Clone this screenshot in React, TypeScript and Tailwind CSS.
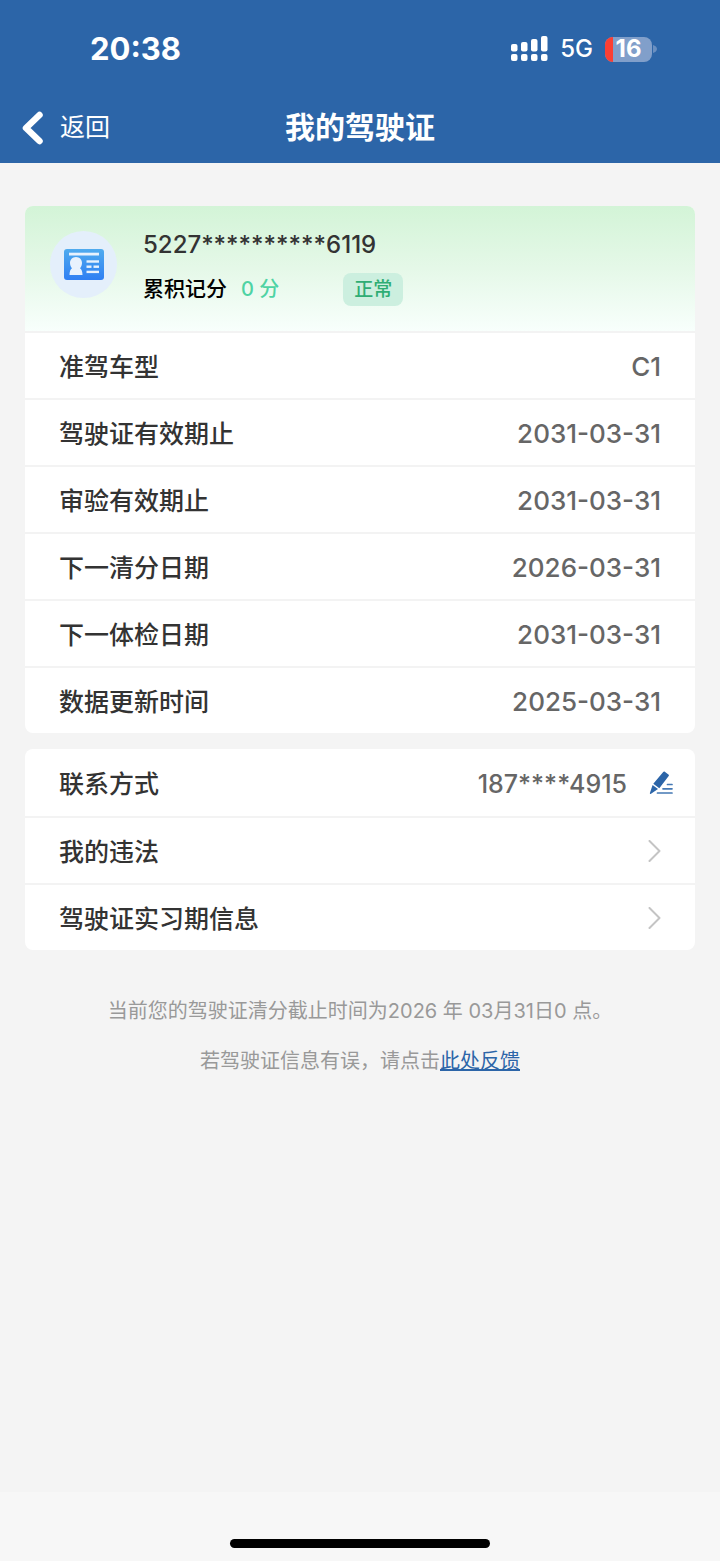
import type { ReactNode } from 'react';

interface LicenseField {
  label: string;
  value: string;
}

const licenseFields: LicenseField[] = [
  { label: '准驾车型', value: 'C1' },
  { label: '驾驶证有效期止', value: '2031-03-31' },
  { label: '审验有效期止', value: '2031-03-31' },
  { label: '下一清分日期', value: '2026-03-31' },
  { label: '下一体检日期', value: '2031-03-31' },
  { label: '数据更新时间', value: '2025-03-31' },
];

const links = ['我的违法', '驾驶证实习期信息'];

function SignalIcon() {
  return (
    <svg viewBox="0 0 37 26" className="h-[26px] w-[37px]" fill="currentColor" aria-hidden="true">
      <rect x="0" y="8" width="6.500" height="7.500" rx="2" />
      <rect x="10" y="6" width="6.500" height="9.500" rx="2" />
      <rect x="20" y="3" width="6.500" height="12.500" rx="2" />
      <rect x="30" y="0" width="6.500" height="15.500" rx="2" />
      <rect x="0" y="18" width="6.500" height="7" rx="2" />
      <rect x="10" y="18" width="6.500" height="7" rx="2" />
      <rect x="20" y="18" width="6.500" height="7" rx="2" />
      <rect x="30" y="18" width="6.500" height="7" rx="2" />
    </svg>
  );
}

function Battery({ level }: { level: number }) {
  return (
    <div className="flex items-center gap-px">
      <div className="relative flex h-[25px] w-[47px] items-center justify-center rounded-lg bg-[#819fca]">
        <div className="absolute inset-y-0 left-0 rounded-l-lg bg-[#fb3f33]" style={{ width: `${level}%` }} />
        <span className="relative text-2xl font-bold">{level}</span>
      </div>
      <svg viewBox="0 0 4 8" className="h-2 w-1" fill="#6a8fc0" aria-hidden="true">
        <path d="M0 0C2.400 .8 4 2 4 4S2.400 7.200 0 8Z" />
      </svg>
    </div>
  );
}

function BackIcon() {
  return (
    <svg viewBox="0 0 22 34" className="h-[34px] w-[22px]" fill="none" aria-hidden="true">
      <path d="M17.500 4 4 17 17.500 30" stroke="currentColor" strokeWidth="6.500" strokeLinecap="round" strokeLinejoin="round" />
    </svg>
  );
}

function LicenseIcon() {
  return (
    <svg viewBox="0 0 40 31" className="h-[31px] w-10" aria-hidden="true">
      <defs>
        <linearGradient id="license-fill" x1="0" y1="0" x2="0" y2="1">
          <stop offset="0" stopColor="#4fabee" />
          <stop offset="1" stopColor="#2f7ff3" />
        </linearGradient>
      </defs>
      <rect width="40" height="31" rx="3" fill="url(#license-fill)" />
      <g fill="#e8f2fd">
        <rect x="5" y="3.700" width="30" height="2.800" />
        <path d="M12 8c3.700 0 6 2.800 6 6 0 2.200-.9 3.900-2 5.200 1.600 1.100 2.500 3.500 2.500 6.800h-13c0-3.300.9-5.700 2.500-6.800-1.100-1.300-2-3-2-5.200 0-3.200 2.300-6 6-6Z" />
        <rect x="22.500" y="11.300" width="12.500" height="2.400" />
        <rect x="22.500" y="16.500" width="5" height="2.400" />
        <rect x="29.500" y="16.500" width="5.500" height="2.400" />
        <rect x="22.500" y="21.700" width="12.500" height="2.400" />
      </g>
    </svg>
  );
}

function EditIcon() {
  return (
    <svg viewBox="0 0 24 24" className="size-6" aria-hidden="true">
      <g fill="#2c65a8">
        <path d="M14.200 1.100c.4-.6 1-.7 1.600-.3l3.600 2.700c.6.400.7 1 .3 1.600L10.300 17.200 4.300 12.700Z" />
        <path d="M3.600 13.900 9 17.900 2 22.800c-.7.400-1.300.1-1.100-.7Z" />
      </g>
      <path d="M18.500 13.500H23M14 17.800h9M8.500 22H23" stroke="#4478b4" strokeWidth="1.700" fill="none" strokeLinecap="round" />
    </svg>
  );
}

function ChevronIcon() {
  return (
    <svg viewBox="0 0 13 22" className="h-[22px] w-[13px]" fill="none" aria-hidden="true">
      <path d="M1.500 1 11.500 11 1.500 21" stroke="#c4c4c4" strokeWidth="2" strokeLinecap="round" strokeLinejoin="round" />
    </svg>
  );
}

function Label({ children }: { children: ReactNode }) {
  return <span className="block pt-1 text-[25px] font-medium text-[#333333]">{children}</span>;
}

export default function App() {
  return (
    <div
      lang="zh-CN"
      className="flex min-h-screen flex-col bg-[#f4f4f4] font-['Inter','Noto_Sans_CJK_SC',sans-serif]"
    >
      <header className="bg-[#2c65a8] text-white">
        <div className="flex h-[98px] items-center justify-between pr-[63px] pl-[90px]">
          <time className="text-[31px] font-bold">20:38</time>
          <div className="flex items-center gap-3">
            <SignalIcon />
            <span className="text-2xl font-medium">5G</span>
            <Battery level={16} />
          </div>
        </div>
        <div className="grid h-[65px] grid-cols-[1fr_auto_1fr] items-center px-[22px] pb-1.5">
          <button type="button" className="flex items-center gap-4 justify-self-start text-[25px]">
            <BackIcon />
            返回
          </button>
          <h1 className="text-[30px] font-bold">我的驾驶证</h1>
        </div>
      </header>

      <main className="flex flex-1 flex-col gap-4 px-[25px] pt-[43px]">
        <section className="overflow-hidden rounded-lg bg-white">
          <div className="flex h-[125px] items-center gap-[26px] bg-linear-to-b from-[#d3f4d7] via-[#e5f8e8] to-[#f8fffc] px-[25px] pb-2">
            <div className="flex size-[67px] items-center justify-center rounded-full bg-[#e4effb]">
              <LicenseIcon />
            </div>
            <div className="pt-[5px]">
              <p className="text-2xl font-medium text-[#333333]">5227**********6119</p>
              <div className="mt-3 flex items-center text-[21px] font-medium">
                <span className="text-black">累积记分</span>
                <span className="ml-3.5 text-xl text-[#4fd3a4]">0 分</span>
                <span className="ml-16 rounded-lg bg-[#ccefdf] px-[11px] text-[19px] leading-[33px] text-[#2fad74]">
                  正常
                </span>
              </div>
            </div>
          </div>

          <dl>
            {licenseFields.map((field) => (
              <div
                key={field.label}
                className="flex h-[67px] items-center justify-between border-t-2 border-[#f3f3f3] px-[34px]"
              >
                <dt>
                  <Label>{field.label}</Label>
                </dt>
                <dd className="pt-px text-[26px] font-medium text-[#666666]">{field.value}</dd>
              </div>
            ))}
          </dl>
        </section>

        <section className="overflow-hidden rounded-lg bg-white">
          <div className="flex h-[67px] items-center pr-[22px] pl-[34px]">
            <Label>联系方式</Label>
            <span className="ml-auto pt-1 text-[25px] font-medium text-[#666666]">187****4915</span>
            <button type="button" aria-label="修改联系方式" className="ml-[22px]">
              <EditIcon />
            </button>
          </div>
          {links.map((link) => (
            <a
              key={link}
              href="#"
              className="flex h-[67px] items-center justify-between border-t-2 border-[#f3f3f3] px-[34px]"
            >
              <Label>{link}</Label>
              <ChevronIcon />
            </a>
          ))}
        </section>

        <div className="mt-5 text-center text-xl leading-[50px] text-[#999999]">
          <p>当前您的驾驶证清分截止时间为2026 年 03月31日0 点。</p>
          <p>
            若驾驶证信息有误，请点击
            <a href="#" className="text-[#2c65a8] underline">
              此处反馈
            </a>
          </p>
        </div>
      </main>

      <footer className="flex h-[69px] items-end justify-center bg-[#f7f7f7] pb-[13px]">
        <div className="h-[9px] w-9/25 rounded-full bg-black" />
      </footer>
    </div>
  );
}
